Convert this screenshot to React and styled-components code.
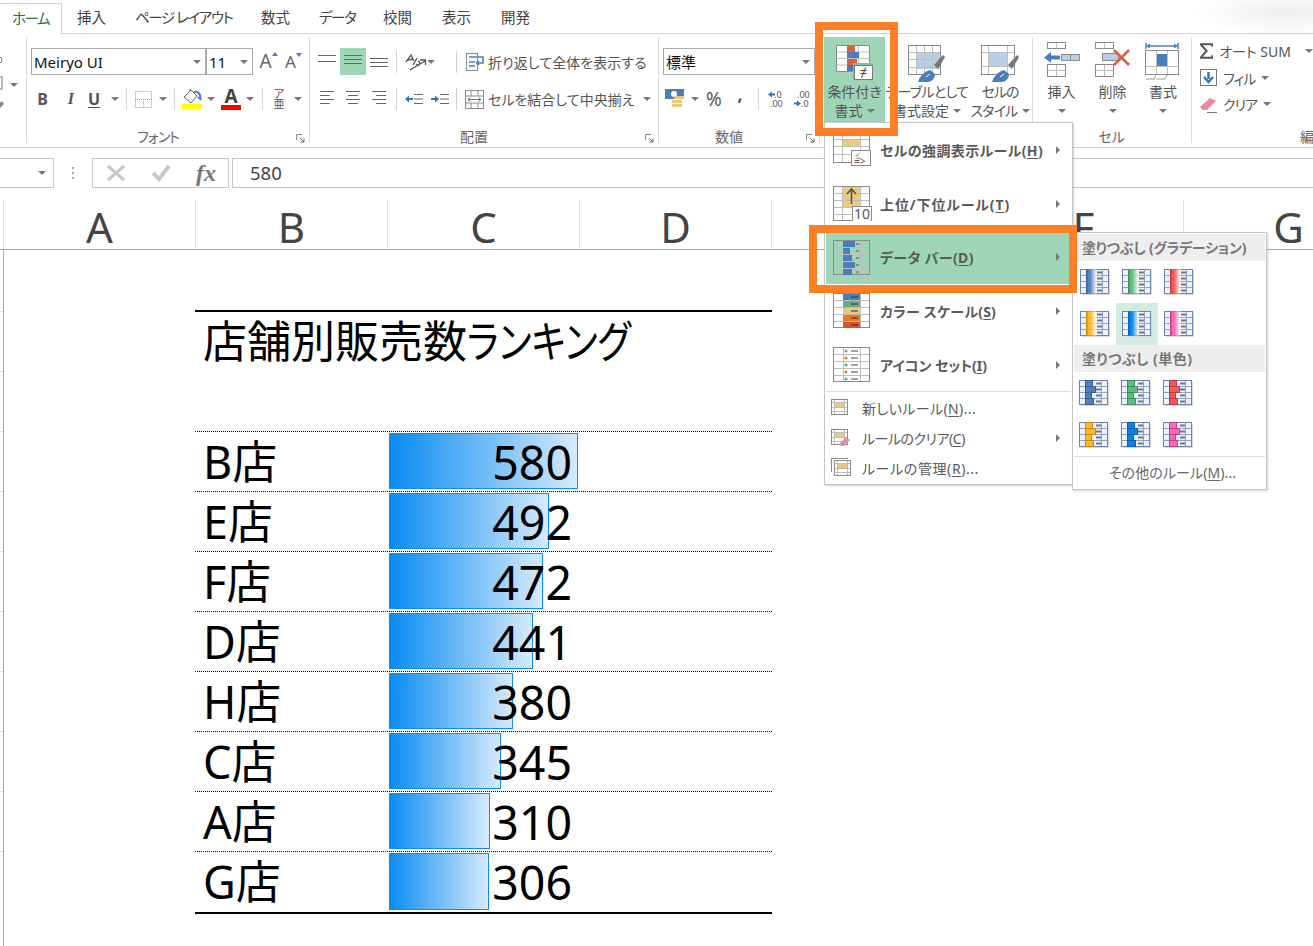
import { useId } from 'react';
import styled, { createGlobalStyle } from 'styled-components';

const FONT = `"Noto Sans", "Noto Sans CJK JP", sans-serif`;

const GlobalStyle = createGlobalStyle`
  html, body { margin: 0; padding: 0; background: #fff; }
  body {
    font-family: ${FONT};
    font-feature-settings: "palt";
    color: #444;
    overflow: hidden;
  }
  * { box-sizing: border-box; }
`;

const Page = styled.div`
  position: relative;
  width: 1313px;
  height: 946px;
  overflow: hidden;
  background: #fff;
`;

/* ---------- tabs ---------- */
const TabBar = styled.div`
  display: flex;
  height: 34px;
  border-bottom: 1px solid #d4d4d4;
  background: radial-gradient(ellipse 90px 24px at 1285px 12px, #eeeeee, rgba(255,255,255,0) 100%);
`;
const Tab = styled.div`
  height: ${p => (p.$active ? '31px' : '30px')};
  margin-top: 3px;
  width: ${p => p.$w}px;
  padding-left: ${p => p.$pad}px;
  font-size: 14.5px;
  letter-spacing: ${p => p.$ls ?? 0}px;
  line-height: 29px;
  white-space: nowrap;
  color: ${p => (p.$active ? '#217346' : '#444')};
  background: ${p => (p.$active ? '#fff' : 'transparent')};
  ${p => p.$active && `
    border: 1px solid #d4d4d4;
    border-left: none;
    border-bottom: none;
    position: relative;
    z-index: 1;
  `}
`;

/* ---------- ribbon ---------- */
const Ribbon = styled.div`
  display: flex;
  height: 114px;
  border-bottom: 1px solid #d4d4d4;
  overflow: hidden;
`;
const Group = styled.section`
  display: flex;
  flex-direction: column;
  flex: none;
  width: ${p => p.$w}px;
  height: 106px;
  margin-top: 3px;
  padding: ${p => p.$top ?? 11}px 0 0 ${p => p.$left ?? 0}px;
  border-right: ${p => (p.$open ? 'none' : '1px solid #dcdcdc')};
`;
const Row = styled.div`
  display: flex;
  align-items: center;
  height: ${p => p.$h ?? 27}px;
  margin-top: ${p => p.$mt ?? 0}px;
`;
const GroupFoot = styled.div`
  display: flex;
  align-items: center;
  height: 16px;
  margin-top: auto;
  margin-bottom: -2px;
`;
const GroupName = styled.div`
  flex: 1;
  margin-left: ${p => p.$nudge ?? 0}px;
  text-align: center;
  font-size: 14px;
  letter-spacing: ${p => p.$ls ?? 0}px;
  line-height: 16px;
  color: #666;
`;
const Launcher = styled.svg`
  flex: none;
  margin: 2px 4px 0 3px;
`;
const Caret = styled.i`
  flex: none;
  display: block;
  width: 0;
  height: 0;
  margin-left: ${p => p.$ml ?? 0}px;
  border-left: 4px solid transparent;
  border-right: 4px solid transparent;
  border-top: 4px solid #777;
`;
const Select = styled.div`
  display: flex;
  align-items: center;
  justify-content: space-between;
  flex: none;
  width: ${p => p.$w}px;
  height: 27px;
  padding: 0 4px 0 2px;
  border: 1px solid #ababab;
  background: #fff;
  font-size: 15px;
  color: #111;
`;
const Slot = styled.div`
  display: flex;
  align-items: center;
  justify-content: ${p => p.$justify ?? 'center'};
  flex: none;
  width: ${p => p.$w}px;
  height: ${p => p.$h ?? 22}px;
  background: ${p => (p.$on ? '#9fd5b7' : 'transparent')};
`;
const VSep = styled.div`
  flex: none;
  width: 1px;
  height: 22px;
  margin: 0 ${p => p.$r ?? 8}px 0 ${p => p.$l ?? 8}px;
  background: #d4d4d4;
`;
const BoldGlyph = styled.span`
  font-family: ${p => (p.$serif ? '"Liberation Serif", serif' : FONT)};
  font-size: ${p => p.$size ?? 16}px;
  font-weight: 700;
  font-style: ${p => (p.$italic ? 'italic' : 'normal')};
  text-decoration: ${p => (p.$under ? 'underline' : 'none')};
  text-underline-offset: 2px;
  margin-bottom: ${p => p.$raise ?? 0}px;
  color: #555;
`;
const SizeGlyph = styled.span`
  position: relative;
  font-size: ${p => p.$size}px;
  line-height: 1;
  color: #666;
  &::after {
    content: '';
    position: absolute;
    right: -6px;
    top: 0;
    border-left: 3.5px solid transparent;
    border-right: 3.5px solid transparent;
    ${p => (p.$down ? 'border-top: 4px solid #4a7ebb;' : 'border-bottom: 4px solid #4a7ebb;')}
  }
`;
const ColorPick = styled.div`
  display: flex;
  flex-direction: column;
  align-items: center;
  flex: none;
  width: 20px;
`;
const ColorBar = styled.div`
  width: 20px;
  height: 5px;
  background: ${p => p.$c};
`;
const ColorA = styled.span`
  font-size: 19px;
  font-weight: 700;
  line-height: 17px;
  height: 17px;
  color: #444;
`;
const Phonetic = styled.span`
  display: flex;
  flex-direction: column;
  align-items: center;
  flex: none;
  width: 12px;
  font-size: 11px;
  line-height: 10px;
  color: #555;
`;
const RibbonText = styled.span`
  margin-left: ${p => p.$ml ?? 0}px;
  font-size: ${p => p.$size ?? 14}px;
  letter-spacing: ${p => p.$ls ?? 0}px;
  white-space: nowrap;
  color: #555;
`;
const BigRow = styled.div`
  display: flex;
  gap: ${p => p.$gap ?? 0}px;
`;
const BigButton = styled.div`
  display: flex;
  flex-direction: column;
  align-items: center;
  flex: none;
  width: ${p => p.$w}px;
  height: 85px;
  padding-top: ${p => p.$pt ?? 8}px;
  background: ${p => (p.$on ? '#9fd5b7' : 'transparent')};
`;
const BigIcon = styled.div`
  display: flex;
  justify-content: center;
  height: ${p => p.$h ?? 37}px;
`;
const BigLabel = styled.div`
  display: flex;
  align-items: center;
  gap: 4px;
  height: 19px;
  font-size: 14px;
  letter-spacing: ${p => p.$ls ?? 0}px;
  line-height: 19px;
  white-space: nowrap;
  color: #555;
`;
const StackRow = styled.div`
  display: flex;
  align-items: center;
  height: ${p => p.$h}px;
  gap: 6px;
`;
const ClippedName = styled.div`
  margin: auto 0 -2px 100px;
  font-size: 14px;
  line-height: 16px;
  color: #666;
`;

/* ---------- formula bar ---------- */
const FormulaBar = styled.div`
  display: flex;
  height: 30px;
  margin-top: 10px;
  align-items: stretch;
`;
const NameBox = styled.div`
  display: flex;
  align-items: center;
  justify-content: flex-end;
  width: 55px;
  margin-left: -1px;
  padding-right: 7px;
  border: 1px solid #c6c6c6;
`;
const Dots = styled.div`
  display: flex;
  flex-direction: column;
  justify-content: center;
  gap: 3px;
  width: 38px;
  padding-left: 18px;
  & i { display: block; width: 2px; height: 2px; background: #aaa; }
`;
const FxBox = styled.div`
  display: flex;
  align-items: center;
  width: 137px;
  padding-left: 13px;
  gap: 25px;
  border: 1px solid #c6c6c6;
`;
const FxGlyph = styled.span`
  font-family: "Liberation Serif", serif;
  font-size: 24px;
  font-style: italic;
  font-weight: 700;
  line-height: 1;
  color: #777;
`;
const FormulaInput = styled.div`
  flex: 1;
  margin-left: 3px;
  margin-right: -2px;
  padding-left: 17px;
  border: 1px solid #c6c6c6;
  font-size: 18.5px;
  line-height: 28px;
  color: #444;
`;

/* ---------- sheet ---------- */
const ColumnHeads = styled.div`
  display: flex;
  height: 50px;
  margin-top: 12px;
  border-bottom: 1px solid #ababab;
`;
const ColHead = styled.div`
  flex: none;
  width: ${p => p.$w}px;
  height: 49px;
  border-left: 1px solid #e0e0e0;
  text-align: center;
  font-size: 42px;
  line-height: 54px;
  color: #444;
`;
const Sheet = styled.div`
  display: flex;
  align-items: flex-start;
`;
const Gutter = styled.div`
  flex: none;
  width: 4px;
  height: 700px;
  border-right: 1px solid #ababab;
  & i { display: block; height: 60px; border-top: 1px solid #dcdcdc; }
  & i:first-child { height: 61px; border-top: none; }
`;
const Table = styled.div`
  width: 577px;
  margin: 60px 0 0 191px;
  border-top: 2px solid #000;
  border-bottom: 2px solid #000;
  color: #000;
`;
const TitleRow = styled.div`
  height: 119px;
  padding: 0 0 0 8px;
  font-size: 44px;
  line-height: 59px;
  white-space: nowrap;
  & span {
    display: inline-block;
    transform: scaleX(0.835);
    transform-origin: left center;
  }
`;
const DataRow = styled.div`
  display: grid;
  grid-template-columns: 193px 191px 193px;
  grid-template-rows: minmax(0, 1fr);
  height: ${p => (p.$last ? 61 : 60)}px;
  border-top: 1px dotted #000;
  font-size: 45px;
  line-height: 60px;
`;
const NameCell = styled.div`
  padding-left: 8px;
  white-space: nowrap;
`;
const ValueCell = styled.div`
  position: relative;
  padding-right: 7px;
  text-align: right;
  font-size: 46.5px;
`;
const ValueText = styled.span`
  position: relative;
`;
const DataBar = styled.div`
  position: absolute;
  left: 1px;
  top: 1px;
  bottom: 2px;
  border: 1px solid #0a8ef5;
  border-left: none;
  background: linear-gradient(90deg, #078bf3 0%, #d6eafc 100%);
`;

/* ---------- menus ---------- */
const Menu = styled.div`
  position: absolute;
  left: 824px;
  top: 122px;
  width: 249px;
  height: 363px;
  padding: 0 1px;
  background: #fff;
  border: 1px solid #c6c6c6;
  box-shadow: 1px 1px 2px rgba(0,0,0,.18);
  z-index: 5;
`;
const MenuItem = styled.div`
  display: flex;
  align-items: center;
  height: ${p => (p.$small ? 29.7 : 53.7)}px;
  padding-left: ${p => (p.$small ? 5 : 7)}px;
  background: ${p => (p.$on ? '#9fd5b7' : 'transparent')};
`;
const MenuIcon = styled.div`
  display: flex;
  align-items: center;
  flex: none;
  width: ${p => (p.$small ? 31 : 47)}px;
`;
const MenuText = styled.span`
  font-size: 14px;
  font-weight: ${p => (p.$bold ? 700 : 400)};
  letter-spacing: ${p => p.$ls ?? 0}px;
  white-space: nowrap;
  color: #595959;
  & u { text-underline-offset: 2px; }
`;
const Arrow = styled.i`
  display: block;
  margin: 0 11px 0 auto;
  width: 0;
  height: 0;
  border-top: 4px solid transparent;
  border-bottom: 4px solid transparent;
  border-left: 4px solid #777;
`;
const MenuSep = styled.div`
  height: 1px;
  margin: 0 0 1px;
  background: #dcdcdc;
`;
const SubMenu = styled.div`
  position: absolute;
  left: 1072px;
  top: 232px;
  width: 195px;
  height: 258px;
  padding: 1px;
  background: #fff;
  border: 1px solid #c6c6c6;
  box-shadow: 1px 1px 2px rgba(0,0,0,.18);
  z-index: 6;
`;
const SubHead = styled.div`
  height: 27px;
  padding-left: 8px;
  background: #eee;
  font-size: 14px;
  font-weight: 700;
  letter-spacing: ${p => p.$ls ?? 0}px;
  line-height: 27px;
  color: #777;
  white-space: nowrap;
`;
const SwatchGrid = styled.div`
  display: grid;
  grid-template-columns: repeat(3, 42px);
  grid-auto-rows: 42px;
  margin-left: ${p => (p.$solid ? -1 : 0)}px;
`;
const SwatchCell = styled.div`
  display: flex;
  align-items: center;
  justify-content: center;
  background: ${p => (p.$on ? '#d3ecdf' : 'transparent')};
`;
const SubFoot = styled.div`
  height: 31px;
  padding-left: 6px;
  border-top: 1px solid #dcdcdc;
  text-align: center;
  font-size: 14px;
  letter-spacing: 0.1px;
  line-height: 32px;
  color: #666;
  & u { text-underline-offset: 2px; }
`;
const OrangeFrame = styled.div`
  position: absolute;
  left: ${p => p.$x}px;
  top: ${p => p.$y}px;
  width: ${p => p.$w}px;
  height: ${p => p.$h}px;
  border: 8px solid #ff7f27;
  z-index: 9;
  pointer-events: none;
`;

/* ---------- icons ---------- */
const GridSvg = ({ x = 0.5, y = 0.5, w, h, cols, rows, stroke = '#8b8b8b', inner = '#bdbdbd' }) => (
  <g fill="none">
    {cols.map(c => <line key={'c' + c} x1={x + c} x2={x + c} y1={y} y2={y + h} stroke={inner} />)}
    {rows.map(r => <line key={'r' + r} y1={y + r} y2={y + r} x1={x} x2={x + w} stroke={inner} />)}
    <rect x={x} y={y} width={w} height={h} stroke={stroke} />
  </g>
);

const OverlayBox = ({ x, y, w = 19, h = 15 }) => (
  <rect x={x} y={y} width={w} height={h} fill="#fff" stroke="#8b8b8b" />
);

const CondFormatIcon = () => (
  <svg width="38" height="36" viewBox="0 0 38 36">
    <rect x="0.5" y="0.5" width="33" height="26" fill="#fff" />
    <GridSvg w={33} h={26} cols={[11, 22]} rows={[6.5, 13, 19.5]} />
    <rect x="11" y="1" width="8" height="6" fill="#d9603b" />
    <rect x="11" y="7" width="12" height="6" fill="#4a7ebb" />
    <rect x="11" y="14" width="10" height="6" fill="#d9603b" />
    <rect x="11" y="20" width="7" height="6" fill="#4a7ebb" />
    <rect x="17" y="18" width="20" height="17" fill="#7cc09a" />
    <rect x="18.5" y="20.5" width="18" height="14" fill="#fff" stroke="#777" />
    <text x="27.5" y="32" textAnchor="middle" fontSize="13" fill="#444" fontFamily="Noto Sans">≠</text>
  </svg>
);
const TableBrushIcon = () => (
  <svg width="38" height="38" viewBox="0 0 38 38">
    <rect x="8" y="8" width="24" height="16" fill="#b9cde4" />
    <GridSvg w={32} h={29} cols={[8, 16, 24]} rows={[7, 14, 22]} />
    <path d="M26 20 L35 10 L37 12 L30 24 Z" fill="#777" />
    <path d="M10 37 C12 30 18 26 22 25 L27 29 C27 33 24 37 20 37 Z" fill="#4a7ebb" />
    <path d="M18 32 L22 29" stroke="#fff" />
  </svg>
);
const StyleBrushIcon = () => (
  <svg width="38" height="38" viewBox="0 0 38 38">
    <rect x="8" y="8" width="18" height="13" fill="#b9cde4" />
    <GridSvg w={33} h={29} cols={[7, 26]} rows={[7, 21]} />
    <path d="M27 20 L36 10 L38 12 L31 24 Z" fill="#777" />
    <path d="M11 37 C13 30 19 26 23 25 L28 29 C28 33 25 37 21 37 Z" fill="#4a7ebb" />
    <path d="M19 32 L23 29" stroke="#fff" />
  </svg>
);
const InsertIcon = () => (
  <svg width="36" height="36" viewBox="0 0 36 36">
    <GridSvg x={3.5} y={0.5} w={18} h={6} cols={[9]} rows={[]} />
    <rect x="17.5" y="12.5" width="18" height="6" fill="#b9cde4" stroke="#8b8b8b" />
    <line x1="26.5" x2="26.5" y1="12" y2="19" stroke="#8b8b8b" />
    <GridSvg x={3.5} y={22.5} w={18} h={12} cols={[9]} rows={[6]} />
    <path d="M0 15.5 L7 10 V13.5 H16 V17.5 H7 V21 Z" fill="#4a7ebb" />
  </svg>
);
const DeleteIcon = () => (
  <svg width="36" height="36" viewBox="0 0 36 36">
    <GridSvg x={0.5} y={0.5} w={18} h={6} cols={[9]} rows={[]} />
    <rect x="7.5" y="11.5" width="16" height="7" fill="#b9cde4" stroke="#8b8b8b" />
    <GridSvg x={0.5} y={22.5} w={18} h={12} cols={[9]} rows={[6]} />
    <path d="M19 8 L34 23 M34 8 L19 23" stroke="#d9603b" strokeWidth="2.5" />
  </svg>
);
const FormatIcon = () => (
  <svg width="36" height="38" viewBox="0 0 36 38">
    <path d="M1 1 V7 M33 1 V7 M3 4 H31" stroke="#4a7ebb" strokeWidth="1.5" fill="none" />
    <path d="M1 4 L5 1.5 V6.5 Z M33 4 L29 1.5 V6.5 Z" fill="#4a7ebb" />
    <GridSvg y={8.5} w={33} h={24} cols={[11, 22]} rows={[16, 24]} />
    <rect x="12" y="12" width="10" height="12" fill="#4a7ebb" />
    <path d="M11 33 L9 37 H1 M22 33 L20 37 H12" fill="none" stroke="#9a9a9a" />
  </svg>
);
const SigmaIcon = () => (
  <svg width="16" height="18" viewBox="0 0 16 18">
    <path d="M15 4 V1 H1 L8 9 L1 17 H15 V14" fill="none" stroke="#555" strokeWidth="2.4" />
  </svg>
);
const FillIcon = () => (
  <svg width="17" height="17" viewBox="0 0 17 17">
    <rect x="0.5" y="0.5" width="16" height="16" fill="#fff" stroke="#777" />
    <path d="M8.5 3 V10 M4 8 L8.5 13 L13 8" fill="none" stroke="#2e75b6" strokeWidth="2.4" />
  </svg>
);
const EraserIcon = () => (
  <svg width="17" height="17" viewBox="0 0 17 17">
    <path d="M0 11 L10 2 L16 5 L7 14 L3 14 Z" fill="#ea8a9e" />
    <path d="M7 16.5 H17" stroke="#777" />
  </svg>
);
const LineStack = ({ y = 0, w = 18, widths = [1, 1, 1], align = 'left', gap = 4 }) => (
  <svg width={w} height={y + 3 + gap * widths.length} viewBox={`0 0 ${w} ${y + 3 + gap * widths.length}`}>
    {widths.map((f, i) => {
      const len = w * f;
      const x = align === 'center' ? (w - len) / 2 : align === 'right' ? w - len : 0;
      return <line key={i} x1={x} x2={x + len} y1={y + 1.5 + i * gap} y2={y + 1.5 + i * gap} stroke="#666" />;
    })}
  </svg>
);
const OrientIcon = () => (
  <svg width="22" height="18" viewBox="0 0 22 18">
    <path d="M1 9 L6 2 L9 8 M3 7 L8 6" fill="none" stroke="#555" strokeWidth="1.3" />
    <path d="M8 12 L12 5 M11 11 a2 2 0 1 0 2 -3" fill="none" stroke="#555" strokeWidth="1.3" />
    <path d="M5 17 L20 8 M15 7 H20.5 V12" fill="none" stroke="#555" strokeWidth="1.3" />
  </svg>
);
const IndentIcon = ({ dir }) => (
  <svg width="18" height="12" viewBox="0 0 18 12">
    {dir === 'in'
      ? <path d="M0 6 L4 2.5 V5 H8 V7 H4 V9.5 Z" fill="#2e75b6" />
      : <path d="M8 6 L4 2.5 V5 H0 V7 H4 V9.5 Z" fill="#2e75b6" />}
    <path d="M9 1.5 H18 M9 6 H18 M9 10.5 H18" stroke="#666" />
  </svg>
);
const WrapIcon = () => (
  <svg width="19" height="18" viewBox="0 0 19 18">
    <rect x="0.5" y="0.5" width="11" height="17" fill="#fff" stroke="#8b8b8b" />
    <path d="M3 4 H15 M3 9 H9 M3 13 H9" stroke="#4a7ebb" strokeWidth="1.3" />
    <path d="M15 4 H17 V10 H11 M13 8 L10.5 10 L13 12" fill="none" stroke="#4a7ebb" strokeWidth="1.5" />
  </svg>
);
const MergeIcon = () => (
  <svg width="20" height="19" viewBox="0 0 20 19">
    <rect x="0.5" y="0.5" width="18" height="18" fill="#fff" stroke="#8b8b8b" />
    <path d="M1 6 H18 M1 13 H18 M6 1 V6 M13 1 V6 M6 13 V18 M13 13 V18" stroke="#8b8b8b" />
    <path d="M3 9.5 H16 M5.5 7.5 L3 9.5 L5.5 11.5 M13.5 7.5 L16 9.5 L13.5 11.5" fill="none" stroke="#4a7ebb" />
  </svg>
);
const CurrencyIcon = () => (
  <svg width="20" height="20" viewBox="0 0 20 20">
    <rect x="0" y="0" width="19" height="10" fill="#4a7ebb" />
    <ellipse cx="9" cy="5" rx="3" ry="3" fill="#fff" />
    <rect x="9" y="7" width="10" height="3" fill="#edc97f" />
    <rect x="7" y="11" width="10" height="3" fill="#edc97f" />
    <rect x="7" y="15" width="10" height="3" fill="#edc97f" />
  </svg>
);
const DecimalIcon = ({ dir }) => (
  <svg width="17" height="22" viewBox="0 0 17 22">
    <text x={dir === 'up' ? 6 : 3} y="10" fontSize="9" fill="#555" fontFamily="Noto Sans">{dir === 'up' ? '.0' : '.00'}</text>
    <text x={dir === 'up' ? 2 : 7} y="19" fontSize="9" fill="#555" fontFamily="Noto Sans">{dir === 'up' ? '.00' : '.0'}</text>
    {dir === 'up'
      ? <path d="M0 6.5 L4 3.5 V5.5 H7 V7.5 H4 V9.5 Z" fill="#2e75b6" />
      : <path d="M7 15.5 L3 12.5 V14.5 H0 V16.5 H3 V18.5 Z" fill="#2e75b6" />}
  </svg>
);
const BucketIcon = () => (
  <svg width="20" height="15" viewBox="0 0 20 15">
    <path d="M2 8 L9 1 L15 7 L9 14 Z" fill="#fff" stroke="#666" />
    <path d="M8 2 V0" stroke="#666" />
    <path d="M12 3 C16 2 19 5 18.5 10 L16 8" fill="none" stroke="#4a7ebb" strokeWidth="2" />
  </svg>
);
const BorderIcon = () => (
  <svg width="17" height="17" viewBox="0 0 17 17">
    <rect x="0.5" y="0.5" width="16" height="16" fill="none" stroke="#999" strokeDasharray="1 1" />
    <path d="M0 8.5 H17 M8.5 8 V17" stroke="#999" strokeDasharray="1 1" />
  </svg>
);
const LauncherIcon = () => (
  <Launcher width="9" height="9" viewBox="0 0 9 9">
    <path d="M0.5 6 V0.5 H6" fill="none" stroke="#888" />
    <path d="M4 4 L8 8 M8 4.5 V8 H4.5" fill="none" stroke="#666" />
  </Launcher>
);
const ClipEdgeIcons = () => (
  <svg width="22" height="70" viewBox="0 0 22 70">
    <circle cx="-1" cy="12" r="3" fill="none" stroke="#4a7ebb" />
    <rect x="-6" y="29" width="8" height="12" fill="#fff" stroke="#777" />
    <path d="M10 35 H18 L14 39 Z" fill="#777" />
    <path d="M-4 58 L2 53 L4 56 L0 60 Z" fill="#888" />
  </svg>
);

const HighlightIcon = () => (
  <svg width="38" height="35" viewBox="0 0 38 35">
    <rect x="10" y="7" width="18" height="7" fill="#edc97f" />
    <GridSvg w={36} h={30} cols={[9, 27]} rows={[7, 14, 22]} />
    <OverlayBox x={18.5} y={18.5} />
    <text x="22" y="27" fontSize="10" fill="#555" fontFamily="Noto Sans">≤</text>
    <text x="21" y="33" fontSize="10" fill="#555" fontFamily="Noto Sans">=&gt;</text>
  </svg>
);
const TopBottomIcon = () => (
  <svg width="39" height="35" viewBox="0 0 39 35">
    <rect x="10" y="1" width="17" height="21" fill="#edc97f" />
    <GridSvg w={36} h={34} cols={[9, 27]} rows={[7, 14, 21, 28]} />
    <path d="M18.5 18 V3 M14 8 L18.5 3 L23 8" fill="none" stroke="#555" strokeWidth="1.6" />
    <OverlayBox x={19.5} y={20.5} />
    <text x="29" y="33" textAnchor="middle" fontSize="14" fill="#555" fontFamily="Noto Sans">10</text>
  </svg>
);
const RowsIcon = ({ children }) => (
  <svg width="38" height="35" viewBox="0 0 38 35">
    <GridSvg w={36} h={34} cols={[10, 27]} rows={[7, 14, 21, 28]} />
    {children}
  </svg>
);
const DataBarMenuIcon = () => (
  <RowsIcon>
    {[12, 7, 9, 12, 9].map((w, i) => (
      <g key={i}>
        <rect x="10" y={1 + i * 7} width={w} height="6" fill="#4a7ebb" />
        <rect x="23" y={3.5 + i * 7} width="3" height="1" fill="#555" />
      </g>
    ))}
  </RowsIcon>
);
const ColorScaleIcon = () => (
  <RowsIcon>
    {['#4a7ebb', '#6aa88c', '#edc97f', '#e8791f', '#d9542f'].map((c, i) => (
      <g key={c}>
        <rect x="10" y={1 + i * 7} width="17" height="6" fill={c} />
        <rect x="18" y={3.5 + i * 7} width="7" height="1" fill="#333" />
      </g>
    ))}
  </RowsIcon>
);
const IconSetIcon = () => (
  <RowsIcon>
    {['#6aa88c', '#e8791f', '#6aa88c', '#e8791f', '#6aa88c'].map((c, i) => (
      <g key={i}>
        <circle cx="13" cy={4 + i * 7} r="1.6" fill={c} />
        <rect x="18" y={3.5 + i * 7} width="7" height="1" fill="#444" />
      </g>
    ))}
  </RowsIcon>
);
const SmallRuleIcon = ({ erase, stacked }) => (
  <svg width="21" height="20" viewBox="0 0 21 20">
    {stacked && <path d="M0.5 14 V0.5 H17" fill="none" stroke="#8b8b8b" />}
    <g transform={stacked ? 'translate(3 2)' : 'translate(0 1)'}>
      <rect x="3" y="3" width="10" height="5" fill="#edc97f" />
      <GridSvg w={16} h={15} cols={[3, 13]} rows={[3, 8, 12]} />
    </g>
    {erase && <path d="M9 15 L15 9 L19 12 L13 18 L10 18 Z" fill="#ea8a9e" />}
  </svg>
);

const SwatchIcon = ({ color, edge, solid }) => {
  const gid = useId();
  return (
    <svg width="30" height="26" viewBox="0 0 30 26">
      <defs>
        <linearGradient id={gid}>
          <stop offset="0.35" stopColor={color} />
          <stop offset="1" stopColor="#fff" />
        </linearGradient>
      </defs>
      <rect x="2" y="2" width="28" height="24" fill="#d9d9d9" />
      <rect x="0.5" y="0.5" width="28" height="24" fill="#eef2fb" />
      <GridSvg w={28} h={24} cols={[6, 22]} rows={[6, 12, 18]} stroke="#6b82b5" inner="#8fa2cc" />
      {[0, 1, 2, 3].map(i => {
        const w = solid ? [7, 10, 6, 8][i] : 10;
        return (
          <g key={i}>
            <rect x="6.5" y={0.5 + i * 6} width={w} height="6" fill={solid ? color : `url(#${gid})`} stroke={solid ? edge : 'none'} />
            {!solid && <rect x="6" y={0.5 + i * 6} width="1.5" height="6" fill={edge} />}
            <rect x="17" y={2.5 + i * 6} width="5" height="2" fill="#777" />
          </g>
        );
      })}
    </svg>
  );
};

const SWATCHES = [
  { color: '#4f81bd', edge: '#3b5f95' },
  { color: '#5fbd7f', edge: '#3d8f5a' },
  { color: '#f0595a', edge: '#c23c3d' },
  { color: '#fdb827', edge: '#c48a10' },
  { color: '#0a84e8', edge: '#0a5fb0' },
  { color: '#f56bb6', edge: '#c23e8b' },
];

const RANKING = [
  { shop: 'B店', value: 580 },
  { shop: 'E店', value: 492 },
  { shop: 'F店', value: 472 },
  { shop: 'D店', value: 441 },
  { shop: 'H店', value: 380 },
  { shop: 'C店', value: 345 },
  { shop: 'A店', value: 310 },
  { shop: 'G店', value: 306 },
];

const TABS = [
  { name: 'ホーム', w: 62, pad: 12, active: true, ls: -1.5 },
  { name: '挿入', w: 73, pad: 15 },
  { name: 'ページ レイアウト', w: 126, pad: 0, ls: -1.4 },
  { name: '数式', w: 58, pad: 0 },
  { name: 'データ', w: 64, pad: 0, ls: -1.4 },
  { name: '校閲', w: 59, pad: 0 },
  { name: '表示', w: 59, pad: 0 },
  { name: '開発', w: 60, pad: 0 },
];

const COLUMNS = [
  { name: 'A', w: 192 },
  { name: 'B', w: 192 },
  { name: 'C', w: 192 },
  { name: 'D', w: 192 },
  { name: 'E', w: 212 },
  { name: 'F', w: 200 },
  { name: 'G', w: 210 },
];

const App = () => (
  <Page>
    <GlobalStyle />
    <TabBar>
      {TABS.map(t => (
        <Tab key={t.name} $w={t.w} $pad={t.pad} $active={t.active} $ls={t.ls}>{t.name}</Tab>
      ))}
    </TabBar>

    <Ribbon>
      <Group $w={27} $top={11}><ClipEdgeIcons /></Group>

      <Group $w={283} $left={4}>
        <Row>
          <Select $w={175}>Meiryo UI<Caret /></Select>
          <Select $w={47}>11<Caret /></Select>
          <Slot $w={25} $h={27}><SizeGlyph $size={19}>A</SizeGlyph></Slot>
          <Slot $w={25} $h={27}><SizeGlyph $size={17} $down>A</SizeGlyph></Slot>
        </Row>
        <Row $h={22} $mt={13}>
          <Slot $w={17} $justify="flex-end"><BoldGlyph>B</BoldGlyph></Slot>
          <Slot $w={26} $justify="flex-end"><BoldGlyph $italic $serif>I</BoldGlyph></Slot>
          <Slot $w={26} $justify="flex-end"><BoldGlyph $under>U</BoldGlyph></Slot>
          <Caret $ml={11} />
          <VSep $l={7} $r={8} />
          <BorderIcon />
          <Caret $ml={7} />
          <VSep $l={7} $r={7} />
          <ColorPick><BucketIcon /><ColorBar $c="#ffff00" /></ColorPick>
          <Caret $ml={5} />
          <Slot $w={6} />
          <ColorPick><ColorA>A</ColorA><ColorBar $c="#ff0000" /></ColorPick>
          <Caret $ml={5} />
          <VSep $l={8} $r={10} />
          <Phonetic><span>ア</span><span>亜</span></Phonetic>
          <Caret $ml={9} />
        </Row>
        <GroupFoot><GroupName $nudge={-8} $ls={-1}>フォント</GroupName><LauncherIcon /></GroupFoot>
      </Group>

      <Group $w={349} $left={8}>
        <Row>
          <Slot $w={22} $h={27} $justify="flex-start"><LineStack widths={[1, 1]} gap={6} /></Slot>
          <Slot $w={26} $h={27} $on><LineStack widths={[1, 1, 1]} /></Slot>
          <Slot $w={22} $h={27} $justify="flex-end"><LineStack widths={[1, 1, 1]} y={6} /></Slot>
          <VSep $l={8} $r={8} />
          <OrientIcon />
          <Caret />
          <VSep $l={21} $r={9} />
          <WrapIcon />
          <RibbonText $ml={3} $ls={0.05}>折り返して全体を表示する</RibbonText>
        </Row>
        <Row $h={22} $mt={13}>
          <Slot $w={16} $justify="flex-end"><LineStack w={14} widths={[1, .7, 1, .7]} /></Slot>
          <Slot $w={26} $justify="flex-end"><LineStack w={14} widths={[1, .7, 1, .7]} align="center" /></Slot>
          <Slot $w={26} $justify="flex-end"><LineStack w={14} widths={[1, .7, 1, .7]} align="right" /></Slot>
          <VSep $l={10} $r={8} />
          <IndentIcon dir="in" />
          <Slot $w={8} />
          <IndentIcon dir="out" />
          <VSep $l={7} $r={8} />
          <MergeIcon />
          <RibbonText $ml={3}>セルを結合して中央揃え</RibbonText>
          <Caret $ml={9} />
        </Row>
        <GroupFoot><GroupName $nudge={-12}>配置</GroupName><LauncherIcon /></GroupFoot>
      </Group>

      <Group $w={161} $left={4}>
        <Row>
          <Select $w={152}>標準<Caret /></Select>
        </Row>
        <Row $h={22} $mt={13}>
          <Slot $w={2} />
          <CurrencyIcon />
          <Caret $ml={6} />
          <Slot $w={30}><RibbonText $size={19}>%</RibbonText></Slot>
          <Slot $w={22}><BoldGlyph $size={18} $raise={10}>,</BoldGlyph></Slot>
          <VSep $l={7} $r={9} />
          <DecimalIcon dir="up" />
          <Slot $w={9} />
          <DecimalIcon dir="down" />
        </Row>
        <GroupFoot><GroupName $nudge={-2}>数値</GroupName><Slot $w={6} $h={1} /><LauncherIcon /></GroupFoot>
      </Group>

      <Group $w={213} $top={0} $left={4}>
        <BigRow $gap={3}>
          <BigButton $w={61} $on>
            <BigIcon><CondFormatIcon /></BigIcon>
            <BigLabel>条件付き</BigLabel>
            <BigLabel>書式<Caret /></BigLabel>
          </BigButton>
          <BigButton $w={78}>
            <BigIcon><TableBrushIcon /></BigIcon>
            <BigLabel $ls={-0.7}>テーブルとして</BigLabel>
            <BigLabel>書式設定<Caret /></BigLabel>
          </BigButton>
          <BigButton $w={62}>
            <BigIcon><StyleBrushIcon /></BigIcon>
            <BigLabel $ls={-1}>セルの</BigLabel>
            <BigLabel $ls={-0.8}>スタイル<Caret /></BigLabel>
          </BigButton>
        </BigRow>
      </Group>

      <Group $w={159} $top={0} $left={3}>
        <BigRow>
          <BigButton $w={51} $pt={5}>
            <BigIcon $h={40}><InsertIcon /></BigIcon>
            <BigLabel>挿入</BigLabel>
            <BigLabel><Caret /></BigLabel>
          </BigButton>
          <BigButton $w={51} $pt={5}>
            <BigIcon $h={40}><DeleteIcon /></BigIcon>
            <BigLabel>削除</BigLabel>
            <BigLabel><Caret /></BigLabel>
          </BigButton>
          <BigButton $w={50} $pt={5}>
            <BigIcon $h={40}><FormatIcon /></BigIcon>
            <BigLabel>書式</BigLabel>
            <BigLabel><Caret /></BigLabel>
          </BigButton>
        </BigRow>
        <GroupFoot><GroupName $nudge={-4}>セル</GroupName></GroupFoot>
      </Group>

      <Group $w={121} $open $top={0} $left={8}>
        <StackRow $h={27}><SigmaIcon /><RibbonText>オート SUM</RibbonText><Caret $ml={8} /></StackRow>
        <StackRow $h={27}><FillIcon /><RibbonText $ls={-1}>フィル</RibbonText><Caret /></StackRow>
        <StackRow $h={26}><EraserIcon /><RibbonText $ls={-1}>クリア</RibbonText><Caret /></StackRow>
        <ClippedName>編</ClippedName>
      </Group>
    </Ribbon>

    <FormulaBar>
      <NameBox><Caret /></NameBox>
      <Dots><i /><i /><i /></Dots>
      <FxBox>
        <svg width="20" height="18" viewBox="0 0 20 18"><path d="M2 2 L18 16 M18 2 L2 16" stroke="#c8c8c8" strokeWidth="3" /></svg>
        <svg width="20" height="18" viewBox="0 0 20 18"><path d="M2 9 L8 15 L18 2" fill="none" stroke="#c8c8c8" strokeWidth="4" /></svg>
        <FxGlyph>fx</FxGlyph>
      </FxBox>
      <FormulaInput>580</FormulaInput>
    </FormulaBar>

    <ColumnHeads>
      <Slot $w={3} $h={49} />
      {COLUMNS.map(c => <ColHead key={c.name} $w={c.w}>{c.name}</ColHead>)}
    </ColumnHeads>

    <Sheet>
      <Gutter><i /><i /><i /><i /><i /><i /><i /><i /><i /><i /><i /></Gutter>
      <Table>
        <TitleRow>店舗別販売数<span>ランキング</span></TitleRow>
        {RANKING.map((r, i) => (
          <DataRow key={r.shop} $last={i === RANKING.length - 1}>
            <NameCell>{r.shop}</NameCell>
            <ValueCell>
              <DataBar style={{ width: Math.round(r.value * 189 / 580) }} />
              <ValueText>{r.value}</ValueText>
            </ValueCell>
          </DataRow>
        ))}
      </Table>
    </Sheet>

    <Menu>
      <MenuItem><MenuIcon><HighlightIcon /></MenuIcon><MenuText $bold $ls={0.4}>セルの強調表示ルール(<u>H</u>)</MenuText><Arrow /></MenuItem>
      <MenuItem><MenuIcon><TopBottomIcon /></MenuIcon><MenuText $bold $ls={0.9}>上位/下位ルール(<u>T</u>)</MenuText><Arrow /></MenuItem>
      <MenuItem $on><MenuIcon><DataBarMenuIcon /></MenuIcon><MenuText $bold $ls={0.4}>データ バー(<u>D</u>)</MenuText><Arrow /></MenuItem>
      <MenuItem><MenuIcon><ColorScaleIcon /></MenuIcon><MenuText $bold $ls={0.2}>カラー スケール(<u>S</u>)</MenuText><Arrow /></MenuItem>
      <MenuItem><MenuIcon><IconSetIcon /></MenuIcon><MenuText $bold>アイコン セット(<u>I</u>)</MenuText><Arrow /></MenuItem>
      <MenuSep />
      <MenuItem $small><MenuIcon $small><SmallRuleIcon /></MenuIcon><MenuText $ls={0.4}>新しいルール(<u>N</u>)...</MenuText></MenuItem>
      <MenuItem $small><MenuIcon $small><SmallRuleIcon erase /></MenuIcon><MenuText $ls={-0.5}>ルールのクリア(<u>C</u>)</MenuText><Arrow /></MenuItem>
      <MenuItem $small><MenuIcon $small><SmallRuleIcon stacked /></MenuIcon><MenuText $ls={0.6}>ルールの管理(<u>R</u>)...</MenuText></MenuItem>
    </Menu>

    <SubMenu>
      <SubHead $ls={-0.2}>塗りつぶし (グラデーション)</SubHead>
      <SwatchGrid>
        {SWATCHES.map((s, i) => (
          <SwatchCell key={s.color} $on={i === 4}><SwatchIcon color={s.color} edge={s.edge} /></SwatchCell>
        ))}
      </SwatchGrid>
      <SubHead $ls={0.5}>塗りつぶし (単色)</SubHead>
      <SwatchGrid $solid>
        {SWATCHES.map(s => (
          <SwatchCell key={s.color}><SwatchIcon color={s.color} edge={s.edge} solid /></SwatchCell>
        ))}
      </SwatchGrid>
      <SubFoot>その他のルール(<u>M</u>)...</SubFoot>
    </SubMenu>

    <OrangeFrame $x={815} $y={22} $w={83} $h={114} />
    <OrangeFrame $x={809} $y={225} $w={268} $h={68} />
  </Page>
);

export default App;
